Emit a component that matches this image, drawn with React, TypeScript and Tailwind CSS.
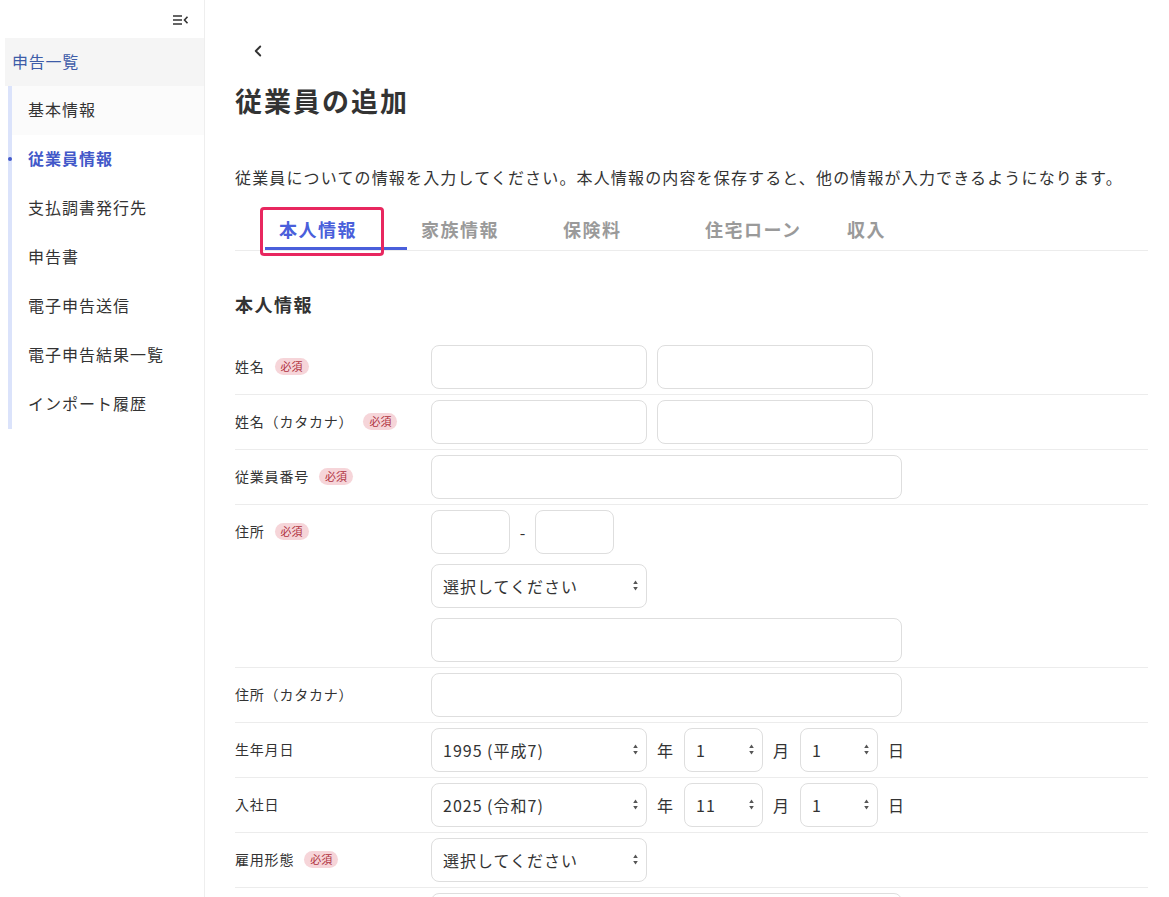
import { ChevronLeft } from 'lucide-react'

const FONT = { fontFamily: '"Noto Sans CJK JP", "Noto Sans", sans-serif' }

const subItems = ['基本情報', '従業員情報', '支払調書発行先', '申告書', '電子申告送信', '電子申告結果一覧', 'インポート履歴']
const tabs = ['本人情報', '家族情報', '保険料', '住宅ローン', '収入']

function Badge() {
  return (
    <span className="ml-[10px] inline-flex h-[17px] items-center rounded-full bg-[#f6d5d9] px-[6px] text-[11px] leading-none tracking-normal text-[#b0323e]">
      必須
    </span>
  )
}

function Input({ w }: { w: string }) {
  return <input className={`h-[44px] ${w} rounded-[8px] border border-[#dedede] bg-white px-3 outline-none`} />
}

function Select({ w, value }: { w: string; value: string }) {
  return (
    <div className={`relative h-[44px] ${w}`}>
      <select
        className="h-full w-full appearance-none rounded-[8px] border border-[#dedede] bg-white pl-[11px] text-[16px] tracking-[1px] text-[#333] outline-none"
        defaultValue={value}
      >
        <option>{value}</option>
      </select>
      <svg className="pointer-events-none absolute right-[9px] top-[16px]" width="5" height="11" viewBox="0 0 5 11">
        <path d="M2.5 0.5 L4.8 4 L0.2 4 Z" fill="#555" />
        <path d="M2.5 10.5 L4.8 7 L0.2 7 Z" fill="#555" />
      </svg>
    </div>
  )
}

function Row({ label, required, children }: { label: string; required?: boolean; children: React.ReactNode }) {
  return (
    <div className="flex items-start border-b border-[#ececec] py-[5px]">
      <div className="flex h-[44px] w-[196px] shrink-0 items-center pb-[2px] text-[14px] tracking-[0.8px] text-[#333]">
        <span>{label}</span>
        {required && <Badge />}
      </div>
      <div className="flex flex-col gap-[10px]">{children}</div>
    </div>
  )
}

function DateRow({ year, month, day }: { year: string; month: string; day: string }) {
  return (
    <div className="flex items-center text-[16px] text-[#333]">
      <Select w="w-[216px]" value={year} />
      <span className="ml-[10px] mr-[11px]">年</span>
      <Select w="w-[79px]" value={month} />
      <span className="ml-[10px] mr-[11px]">月</span>
      <Select w="w-[78px]" value={day} />
      <span className="ml-[10px]">日</span>
    </div>
  )
}

export default function App() {
  return (
    <div className="flex min-h-[897px] bg-white text-[#333]" style={FONT}>
      {/* sidebar */}
      <aside className="w-[205px] shrink-0 border-r border-[#eeeeee] bg-white">
        <div className="flex h-[38px] items-center justify-end pr-[15px] pt-[2px]">
          <svg width="16" height="12" viewBox="0 0 16 12" fill="none" stroke="#333" strokeWidth="1.6">
            <path d="M0 2 H9 M0 6 H9 M0 10 H9" />
            <path d="M14.5 2.8 L11.5 6 L14.5 9.2" />
          </svg>
        </div>
        <div className="ml-[5px] flex h-[48px] items-center bg-[#f5f5f5] pb-[2px] pl-[7px] text-[16px] tracking-[0.75px] text-[#3d5ca8]">
          申告一覧
        </div>
        <div className="ml-[8px] border-l-[4px] border-[#dbe3fb]">
          {subItems.map((item, i) => (
            <div
              key={item}
              className={`relative flex h-[49px] items-center pb-[3px] pl-[16px] text-[16px] tracking-[1px] ${i === 0 ? 'bg-[#fbfbfb]' : ''} ${
                i === 1 ? 'font-bold text-[#4258c9]' : 'text-[#333]'
              }`}
            >
              {i === 1 && <span className="absolute left-[-4px] top-[22px] h-[4px] w-[4px] rounded-full bg-[#4258c9]" />}
              {item}
            </div>
          ))}
        </div>
      </aside>

      {/* main */}
      <main className="flex-1 pl-[30px] pr-[21px]">
        <div className="flex h-[50px] items-end pl-[14px]">
          <ChevronLeft size={18} strokeWidth={2.5} className="mb-[-10px] text-[#333]" />
        </div>
        <h1 className="mt-[33px] text-[27px] font-bold leading-[36px] tracking-[2px] text-[#333]">従業員の追加</h1>
        <p className="mt-[46px] text-[16px] leading-[24px] tracking-[1.15px] text-[#333]">
          従業員についての情報を入力してください。本人情報の内容を保存すると、他の情報が入力できるようになります。
        </p>
        <div className="mt-[22px] flex border-b border-[#ececec] pl-[30px]">
          {tabs.map((t, i) => (
            <div
              key={t}
              className={`relative flex h-[39px] w-[142px] items-center pl-[14px] text-[18px] font-bold tracking-[1.5px] ${
                i === 0 ? 'border-b-[3px] border-[#4a5fdb] text-[#4a5fdb]' : 'border-b-[3px] border-transparent text-[#9a9a9a]'
              }`}
            >
              {t}
              {i === 0 && (
                <span className="pointer-events-none absolute left-[-5px] top-[-4px] h-[49px] w-[124px] rounded-[4px] border-[3px] border-[#e8275f]" />
              )}
            </div>
          ))}
        </div>

        <h2 className="mt-[41px] text-[18px] font-bold leading-[24px] tracking-[1.5px] text-[#333]">本人情報</h2>

        <div className="mt-[24px]">
          <Row label="姓名" required>
            <div className="flex gap-[10px]">
              <Input w="w-[216px]" />
              <Input w="w-[216px]" />
            </div>
          </Row>
          <Row label="姓名（カタカナ）" required>
            <div className="flex gap-[10px]">
              <Input w="w-[216px]" />
              <Input w="w-[216px]" />
            </div>
          </Row>
          <Row label="従業員番号" required>
            <Input w="w-[471px]" />
          </Row>
          <Row label="住所" required>
            <div className="flex items-center">
              <Input w="w-[79px]" />
              <span className="mx-[9px] w-[7px] text-center text-[16px]">-</span>
              <Input w="w-[79px]" />
            </div>
            <Select w="w-[216px]" value="選択してください" />
            <Input w="w-[471px]" />
          </Row>
          <Row label="住所（カタカナ）">
            <Input w="w-[471px]" />
          </Row>
          <Row label="生年月日">
            <DateRow year="1995 (平成7)" month="1" day="1" />
          </Row>
          <Row label="入社日">
            <DateRow year="2025 (令和7)" month="11" day="1" />
          </Row>
          <Row label="雇用形態" required>
            <Select w="w-[216px]" value="選択してください" />
          </Row>
          <Row label="">
            <Input w="w-[471px]" />
          </Row>
        </div>
      </main>
    </div>
  )
}
